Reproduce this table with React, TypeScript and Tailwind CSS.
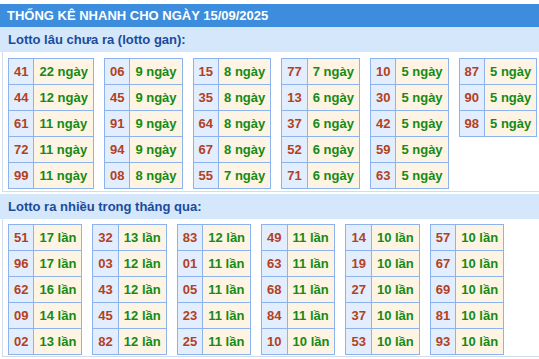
import React from "react";

type Row = [string, string];

const gan: Row[][] = [
  [["41", "22"], ["44", "12"], ["61", "11"], ["72", "11"], ["99", "11"]],
  [["06", "9"], ["45", "9"], ["91", "9"], ["94", "9"], ["08", "8"]],
  [["15", "8"], ["35", "8"], ["64", "8"], ["67", "8"], ["55", "7"]],
  [["77", "7"], ["13", "6"], ["37", "6"], ["52", "6"], ["71", "6"]],
  [["10", "5"], ["30", "5"], ["42", "5"], ["59", "5"], ["63", "5"]],
  [["87", "5"], ["90", "5"], ["98", "5"]],
];

const nhieu: Row[][] = [
  [["51", "17"], ["96", "17"], ["62", "16"], ["09", "14"], ["02", "13"]],
  [["32", "13"], ["03", "12"], ["43", "12"], ["45", "12"], ["82", "12"]],
  [["83", "12"], ["01", "11"], ["05", "11"], ["23", "11"], ["25", "11"]],
  [["49", "11"], ["63", "11"], ["68", "11"], ["84", "11"], ["10", "10"]],
  [["14", "10"], ["19", "10"], ["27", "10"], ["37", "10"], ["53", "10"]],
  [["57", "10"], ["67", "10"], ["69", "10"], ["81", "10"], ["93", "10"]],
];

function LottoTable({ rows, unit }: { rows: Row[]; unit: string }) {
  return (
    <table className="border-collapse">
      <tbody>
        {rows.map(([n, v], i) => (
          <tr key={i}>
            <td className="border border-[#8db3ee] bg-[#e2eefd] px-[5px] py-[5px] leading-[15px] text-center text-[13px] font-bold text-[#b3401e] whitespace-nowrap">
              {n}
            </td>
            <td className="border border-[#8db3ee] bg-[#fef4e3] px-[5px] py-[5px] leading-[15px] text-[13px] font-bold text-[#158a15] whitespace-nowrap">
              {v} {unit}
            </td>
          </tr>
        ))}
      </tbody>
    </table>
  );
}

function Band({ children }: { children: React.ReactNode }) {
  return (
    <div className="h-[25px] bg-[#d5e7fb] pl-[8px] flex items-center text-[13px] font-bold text-[#1b4b9b]">
      {children}
    </div>
  );
}

export default function App() {
  return (
    <div className="w-[539px] h-[359px] bg-white pt-[4px] font-['Liberation_Sans',Arial,sans-serif] overflow-hidden">
      <div className="h-[23px] bg-[#3c8ddd] pl-[7px] flex items-center text-[13px] font-bold text-white">
        THỐNG KÊ NHANH CHO NGÀY 15/09/2025
      </div>
      <Band>Lotto lâu chưa ra (lotto gan):</Band>
      <div className="ml-[2px] border-l border-b border-[#d3dde9] flex items-start gap-[10px] pl-[5px] pt-[6px] pb-[2px]">
        {gan.map((t, i) => (
          <LottoTable key={i} rows={t} unit="ngày" />
        ))}
      </div>
      <div className="mt-[2px]">
        <Band>Lotto ra nhiều trong tháng qua:</Band>
      </div>
      <div className="ml-[2px] border-l border-b border-[#d3dde9] flex items-start gap-[10px] pl-[5px] pt-[5px] pb-[1px]">
        {nhieu.map((t, i) => (
          <LottoTable key={i} rows={t} unit="lần" />
        ))}
      </div>
    </div>
  );
}
